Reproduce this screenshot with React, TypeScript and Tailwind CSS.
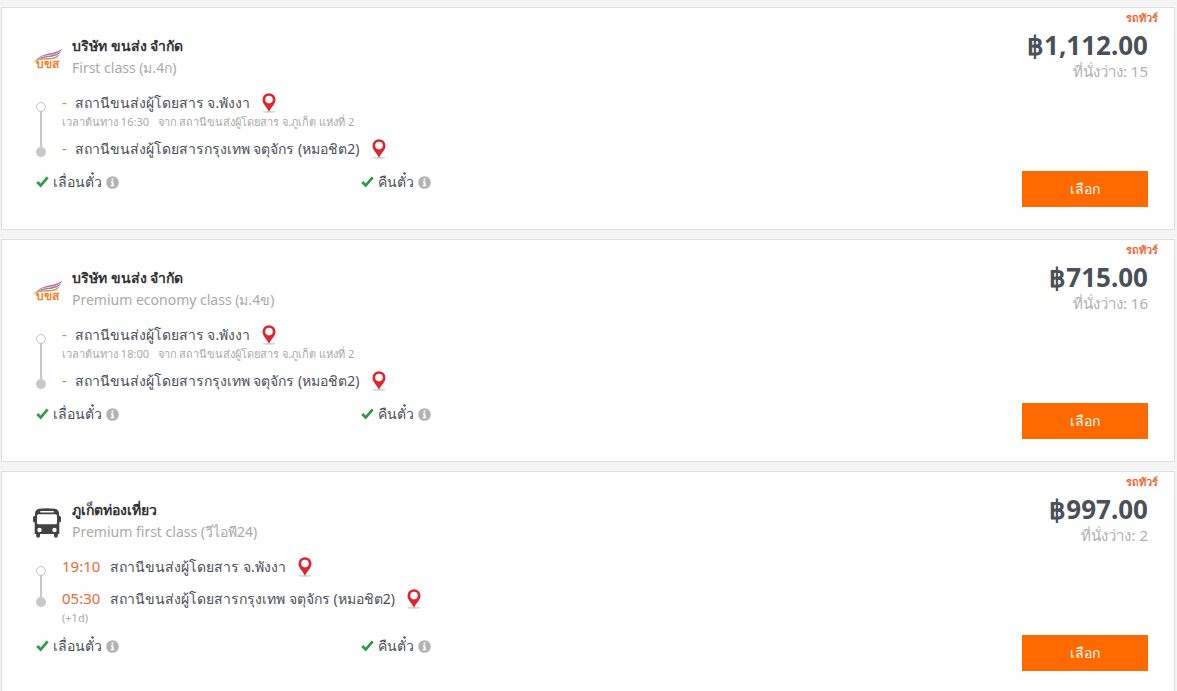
import React from 'react';

type Stop = {
  time?: string;
  name: string;
  note?: string;
};

type Trip = {
  id: string;
  operator: string;
  logo: 'transport' | 'bus';
  seatClass: string;
  price: string;
  seats: number;
  stops: Stop[];
};

const trips: Trip[] = [
  {
    id: 'trip-1',
    operator: 'บริษัท ขนส่ง จำกัด',
    logo: 'transport',
    seatClass: 'First class (ม.4ก)',
    price: '฿1,112.00',
    seats: 15,
    stops: [
      { name: 'สถานีขนส่งผู้โดยสาร จ.พังงา', note: 'เวลาต้นทาง 16:30 \u00a0 จาก สถานีขนส่งผู้โดยสาร จ.ภูเก็ต แห่งที่ 2' },
      { name: 'สถานีขนส่งผู้โดยสารกรุงเทพ จตุจักร (หมอชิต2)' },
    ],
  },
  {
    id: 'trip-2',
    operator: 'บริษัท ขนส่ง จำกัด',
    logo: 'transport',
    seatClass: 'Premium economy class (ม.4ข)',
    price: '฿715.00',
    seats: 16,
    stops: [
      { name: 'สถานีขนส่งผู้โดยสาร จ.พังงา', note: 'เวลาต้นทาง 18:00 \u00a0 จาก สถานีขนส่งผู้โดยสาร จ.ภูเก็ต แห่งที่ 2' },
      { name: 'สถานีขนส่งผู้โดยสารกรุงเทพ จตุจักร (หมอชิต2)' },
    ],
  },
  {
    id: 'trip-3',
    operator: 'ภูเก็ตท่องเที่ยว',
    logo: 'bus',
    seatClass: 'Premium first class (วีไอพี24)',
    price: '฿997.00',
    seats: 2,
    stops: [
      { time: '19:10', name: 'สถานีขนส่งผู้โดยสาร จ.พังงา' },
      { time: '05:30', name: 'สถานีขนส่งผู้โดยสารกรุงเทพ จตุจักร (หมอชิต2)', note: '(+1d)' },
    ],
  },
];

function TransportLogo() {
  return (
    <svg viewBox="0 -4 32 32" className="size-8" aria-hidden="true">
      <path d="M5 12C10 7.500 14 7 19 6S27 4 30.500 1.500C29 5 25 6.800 19 7.800S10 9 5 12Z" fill="#dd6aa6" />
      <path d="M3 13.300C8 9.500 13 9.300 18 8.500S26 6.500 29 4.500C27.500 8 23.500 9.200 18 10S8 11 3 13.300Z" fill="#6f93bd" />
      <path d="M.500 16.500C3.500 11.500 9 10.500 15 11S24 9.500 27.500 7.500C26 11 22.500 12.200 17 12.500S5.500 12 .500 16.500Z" fill="#f6923f" />
      <text x="15" y="21" textAnchor="middle" className="fill-[#f4802a] text-[12px] font-bold">
        บขส
      </text>
    </svg>
  );
}

function BusLogo() {
  return (
    <svg viewBox="0 0 28 30" className="ml-px h-[30px] w-7" aria-hidden="true">
      <path
        fillRule="evenodd"
        fill="#434345"
        d="M6 .800Q14 -.300 22 .800Q25.500 1.500 26 5V8H26.700Q28 8 28 9.500V13Q28 14.200 26.700 14.200H26.300V26H24.800V28Q24.800 29.800 22.900 29.800T21 28V26H7V28Q7 29.800 5.100 29.800T3.200 28V26H1.700V14.200H1.300Q0 14.200 0 13V9.500Q0 8 1.300 8H2V5Q2.500 1.500 6 .800ZM8 3Q7 3 7 3.700T8 4.400H20Q21 4.400 21 3.700T20 3ZM5.500 6.300Q4 6.300 4 7.800V14.700Q4 16.200 5.500 16.200H22.500Q24 16.200 24 14.700V7.800Q24 6.300 22.500 6.300ZM6.500 19.800A2.200 2.200 0 1 0 6.500 24.200A2.200 2.200 0 1 0 6.500 19.800ZM21.500 19.800A2.200 2.200 0 1 0 21.500 24.200A2.200 2.200 0 1 0 21.500 19.800Z"
      />
    </svg>
  );
}

function PinIcon() {
  return (
    <svg viewBox="0 0 14 20" className="h-5 w-3.5" aria-hidden="true">
      <ellipse cx="7" cy="18.800" rx="6.500" ry="1" fill="#d3d5d6" />
      <path
        fillRule="evenodd"
        fill="#e0242c"
        d="M7 .200A6.500 6.500 0 0 0 .500 6.700C.500 11 4.500 13.500 7 18.800C9.500 13.500 13.500 11 13.500 6.700A6.500 6.500 0 0 0 7 .200ZM7 2.800A3.800 3.800 0 1 1 7 10.400A3.800 3.800 0 1 1 7 2.800Z"
      />
    </svg>
  );
}

function CheckIcon() {
  return (
    <svg viewBox="0 0 13 12" className="h-3 w-[13px]" aria-hidden="true">
      <path d="M1.200 6L4.700 9.500L11.600 1.300" fill="none" stroke="#2d9b45" strokeWidth="2.700" />
    </svg>
  );
}

function InfoIcon() {
  return (
    <svg viewBox="0 0 13 13" className="size-[13px]" aria-hidden="true">
      <circle cx="6.500" cy="6.500" r="6.300" fill="#b3b3b3" />
      <path d="M5.600 2.500H7.500V4.200H5.600ZM4.900 5.300H7.500V9H8.300V10.300H4.800V9H5.600V6.500H4.900Z" fill="#fff" />
    </svg>
  );
}

function Perk({ label }: { label: string }) {
  return (
    <div className="flex items-center gap-1">
      <CheckIcon />
      <span>{label}</span>
      <button type="button" aria-label={`ข้อมูล${label}`}>
        <InfoIcon />
      </button>
    </div>
  );
}

function StopRow({ stop, last }: { stop: Stop; last: boolean }) {
  return (
    <li className="flex">
      <div className="flex w-[26px] shrink-0 flex-col items-start">
        <div className={last ? 'ml-1 h-2.5 w-0.5 bg-[#c8c8c8]' : 'h-[11px]'} />
        {last ? (
          <div className="size-2.5 rounded-full bg-[#c8c8c8]" />
        ) : (
          <>
            <div className="size-2.5 rounded-full border border-[#c0c0c0] bg-white" />
            <div className="ml-1 w-0.5 flex-1 bg-[#c8c8c8]" />
          </>
        )}
      </div>
      <div className={last ? '' : 'pb-2'}>
        <div className="flex h-6 items-center">
          <span className={stop.time ? 'mr-2.5 text-[15px] text-[#ec6a35]' : 'mr-2 text-[15px] text-[#cf8a3c]'}>
            {stop.time ?? '-'}
          </span>
          <span>{stop.name}</span>
          <button type="button" aria-label="แผนที่" className="ml-3">
            <PinIcon />
          </button>
        </div>
        {stop.note && <p className="text-[11px] leading-[14px] text-[#a9a9a9]">{stop.note}</p>}
      </div>
    </li>
  );
}

function TripCard({ trip }: { trip: Trip }) {
  return (
    <article className="flex justify-between border border-[#dfdfdf] bg-white pb-[22px] pr-4">
      <div className="min-w-0 flex-1 pt-[27px] pb-3.5">
        <header className="flex gap-2 pl-[30px]">
          <div className="flex w-8 shrink-0 items-center pt-1">
            {trip.logo === 'bus' ? <BusLogo /> : <TransportLogo />}
          </div>
          <div>
            <h2 className="text-sm leading-[22px] font-semibold text-[#333]">{trip.operator}</h2>
            <p className="text-sm leading-[22px] text-[#a9a9a9]">{trip.seatClass}</p>
          </div>
        </header>
        <ul className="mt-3 pl-[34px]">
          {trip.stops.map((stop, i) => (
            <StopRow key={stop.name} stop={stop} last={i === trip.stops.length - 1} />
          ))}
        </ul>
        <div className="mt-2.5 grid max-w-[684px] grid-cols-2 pl-[34px] leading-[22px]">
          <Perk label="เลื่อนตั๋ว" />
          <Perk label="คืนตั๋ว" />
        </div>
      </div>
      <div className="flex flex-col items-end">
        <p className="pt-0.5 text-[11px] leading-4 font-semibold text-[#f26a36]">รถทัวร์</p>
        <div className="flex flex-1 flex-col items-end pr-2.5 pt-1">
          <p className="text-[26px] leading-[30px] font-bold text-[#4a5058]">{trip.price}</p>
          <p className="text-[15px] leading-[22px] text-[#b0b0b0]">ที่นั่งว่าง: {trip.seats}</p>
          <button type="button" className="mt-auto h-9 w-[126px] bg-[#ff6a00] text-sm text-white">
            เลือก
          </button>
        </div>
      </div>
    </article>
  );
}

export default function App() {
  return (
    <main className="flex min-h-screen flex-col gap-[9px] bg-[#f5f5f5] pt-[7px] pr-0.5 pl-px font-['Noto_Sans',sans-serif] text-sm text-[#4a4f57]">
      {trips.map((trip) => (
        <TripCard key={trip.id} trip={trip} />
      ))}
    </main>
  );
}
